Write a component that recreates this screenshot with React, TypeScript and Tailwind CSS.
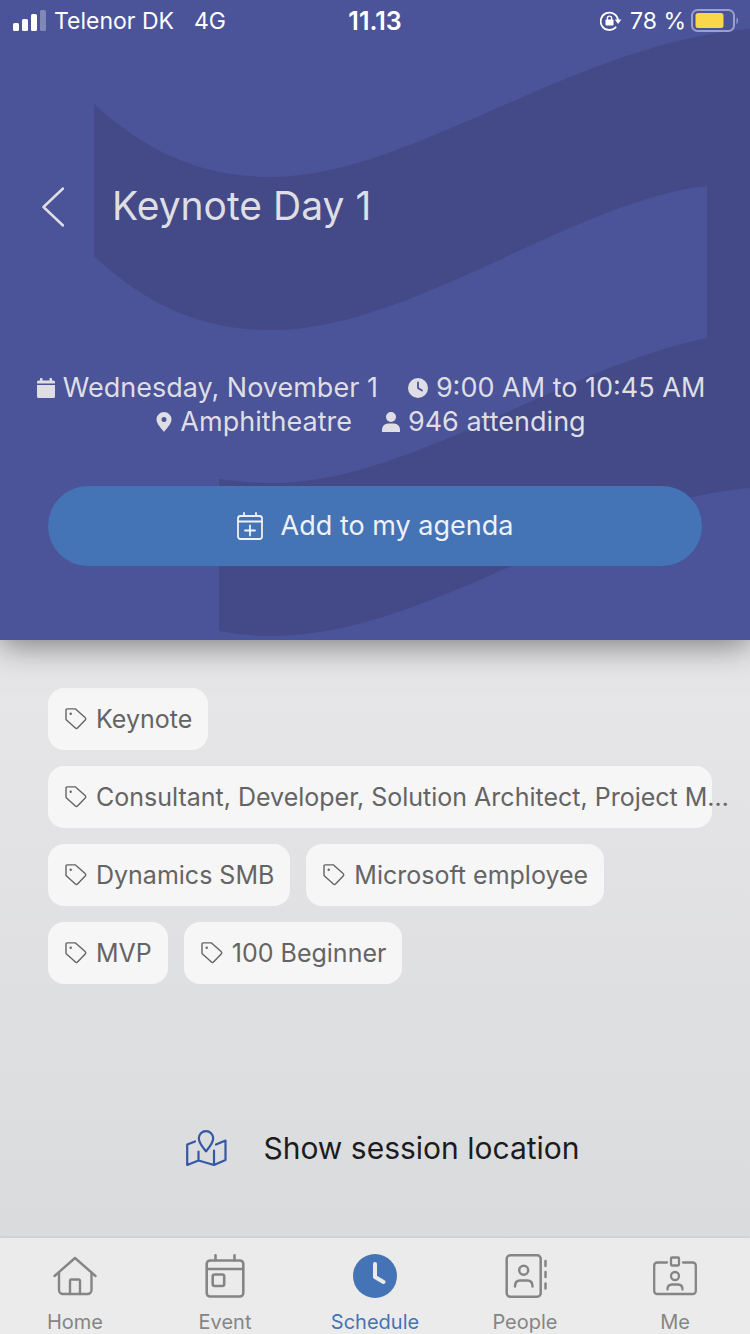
import type { ReactNode } from 'react'

interface Tab {
  label: string
  icon: ReactNode
  active?: boolean
}

const tags = [
  'Keynote',
  'Consultant, Developer, Solution Architect, Project M…',
  'Dynamics SMB',
  'Microsoft employee',
  'MVP',
  '100 Beginner',
]

const tabs: Tab[] = [
  { label: 'Home', icon: <HomeIcon /> },
  { label: 'Event', icon: <EventIcon /> },
  { label: 'Schedule', icon: <ScheduleIcon />, active: true },
  { label: 'People', icon: <PeopleIcon /> },
  { label: 'Me', icon: <BadgeIcon /> },
]

const strokeProps = {
  fill: 'none',
  stroke: 'currentColor',
  strokeLinecap: 'round' as const,
  strokeLinejoin: 'round' as const,
  'aria-hidden': true,
}

function HomeIcon() {
  return (
    <svg viewBox="0 0 44 44" className="size-11" {...strokeProps} strokeWidth="2.4">
      <path d="M1.5 22 22 4l20.5 18" />
      <path d="M6 18.5V36a4 4 0 0 0 4 4h24.5a4 4 0 0 0 4-4V18.5" />
      <path d="M17 40V27a1.5 1.5 0 0 1 1.5-1.5h7A1.5 1.5 0 0 1 27 27v13" />
    </svg>
  )
}

function EventIcon() {
  return (
    <svg viewBox="0 0 44 44" className="size-11" {...strokeProps} strokeWidth="2.6">
      <rect x="3.7" y="6.5" width="36.6" height="36" rx="3.5" />
      <path d="M4 15h36M12.5 1.3v5M31.5 1.3v5" />
      <rect x="9.7" y="20.5" width="11.5" height="11.5" rx="2" />
    </svg>
  )
}

function ScheduleIcon() {
  return (
    <svg viewBox="0 0 44 44" className="size-11" {...strokeProps} strokeWidth="4">
      <circle cx="22" cy="22" r="22" fill="currentColor" stroke="none" />
      <path d="M22 10v13l8.5 5" stroke="#ebebeb" />
    </svg>
  )
}

function PeopleIcon() {
  return (
    <svg viewBox="0 0 44 44" className="size-11" {...strokeProps} strokeWidth="2.5">
      <rect x="3.7" y="1.3" width="34" height="41.4" rx="3.5" />
      <circle cx="20.7" cy="16.3" r="4.5" />
      <path d="M12 32.5c0-4 2-6 5-6h7.5c3 0 5 2 5 6" />
      <path d="M42.5 7v5M42.5 18v5M42.5 29.5v5" />
    </svg>
  )
}

function BadgeIcon() {
  return (
    <svg viewBox="0 0 44 44" className="size-11" {...strokeProps} strokeWidth="2.3">
      <path d="M14 8.500H4.200a3 3 0 0 0-3 3V37a3 3 0 0 0 3 3h35.600a3 3 0 0 0 3-3V11.500a3 3 0 0 0-3-3H30" />
      <rect x="18" y="3.5" width="8" height="8" rx="1" />
      <circle cx="22" cy="22" r="4" />
      <path d="M14.5 35.5c0-3.500 2-5 4.500-5h6c2.500 0 4.500 1.500 4.500 5" />
    </svg>
  )
}

function TagIcon() {
  return (
    <svg viewBox="0 0 24 24" className="size-6 shrink-0" {...strokeProps} strokeWidth="1.4">
      <path d="M3 1.900h8.500l9.600 8.600a1.600 1.600 0 0 1 .1 2.400l-7.700 8a1.500 1.500 0 0 1-2.100.1L2.500 13a1.500 1.500 0 0 1-.5-1.100V2.900a1 1 0 0 1 1-1Z" />
      <circle cx="6.7" cy="6.7" r="1.2" fill="currentColor" stroke="none" />
    </svg>
  )
}

function CalendarPlusIcon() {
  return (
    <svg viewBox="0 0 26 28" className="h-7 w-[26px]" {...strokeProps} strokeWidth="1.8">
      <rect x="1" y="4" width="24" height="23" rx="2.5" />
      <path d="M1 9.5h24M7 1v3M19 1v3M13 13.5v10M8 18.5h10" />
    </svg>
  )
}

function MapIcon() {
  return (
    <svg viewBox="0 0 41 37" className="h-[37px] w-[41px]" {...strokeProps} strokeWidth="2.2">
      <path d="m9 11.5-7.8 3V35l11.300-4.500L28 35l11.500-5V10.500l-9.500 4M12.500 21.500v9M28 20.500V35" />
      <path d="M20 21.300c-2-2.500-7.200-8-7.200-13a7.200 7.200 0 0 1 14.400 0c0 5-5.200 10.500-7.200 13Z" />
    </svg>
  )
}

function CalendarIcon() {
  return (
    <svg viewBox="0 0 18 20" className="h-5 w-[18px]" fill="currentColor" aria-hidden>
      <path d="M0 5.500V4a1.500 1.500 0 0 1 1.500-1.500H3V1a1 1 0 0 1 2.500 0v1.500h7V1A1 1 0 0 1 15 1v1.500h1.500A1.500 1.500 0 0 1 18 4v1.500ZM0 7h18v11.500a1.500 1.500 0 0 1-1.500 1.500h-15A1.500 1.500 0 0 1 0 18.500Z" />
    </svg>
  )
}

function ClockIcon() {
  return (
    <svg viewBox="0 0 20 20" className="size-5" aria-hidden>
      <circle cx="10" cy="10" r="10" fill="currentColor" />
      <path d="M10 4.5V10l4 2.5" fill="none" stroke="#4b5399" strokeWidth="1.8" strokeLinecap="round" />
    </svg>
  )
}

function PinIcon() {
  return (
    <svg viewBox="0 0 16 20" className="h-5 w-4" fill="currentColor" fillRule="evenodd" aria-hidden>
      <path d="M8 20C6 17 .5 12 .5 7.500a7.500 7.500 0 0 1 15 0C15.500 12 10 17 8 20ZM8 5a2.500 2.500 0 1 0 0 5 2.500 2.500 0 0 0 0-5Z" />
    </svg>
  )
}

function PersonIcon() {
  return (
    <svg viewBox="0 0 18 20" className="h-5 w-[18px]" fill="currentColor" aria-hidden>
      <circle cx="9" cy="5" r="5" />
      <path d="M0 20v-2.500a6 6 0 0 1 6-6h6a6 6 0 0 1 6 6V20Z" />
    </svg>
  )
}

function StatusBar() {
  return (
    <div className="grid h-[42px] grid-cols-3 items-center px-3 text-[23px] leading-8 text-white">
      <div className="flex items-center gap-2 whitespace-nowrap">
        <svg viewBox="0 0 34 22" className="h-[22px] w-[34px]" fill="currentColor" aria-hidden>
          <rect x="1" y="13" width="6" height="8" rx="1.5" />
          <rect x="10" y="9" width="6" height="12" rx="1.5" />
          <rect x="19" y="4" width="6" height="17" rx="1.5" />
          <rect x="28" y="0" width="6" height="21" rx="1.5" opacity="0.3" />
        </svg>
        <span>Telenor DK</span>
        <span className="ml-3">4G</span>
      </div>
      <div className="text-center text-[25px] font-semibold">11.13</div>
      <div className="flex items-center justify-end whitespace-nowrap">
        <svg viewBox="0 0 22 20" className="mr-2 h-5 w-[22px]" aria-hidden>
          <path
            d="M15.700 16.300A8.700 8.700 0 1 1 18 9"
            fill="none"
            stroke="currentColor"
            strokeWidth="1.8"
            strokeLinecap="round"
          />
          <path d="M14.800 8.600h6.600l-3.300 4.400Z" fill="currentColor" />
          <rect x="5.5" y="8.500" width="8" height="6" rx="0.8" fill="currentColor" />
          <path d="M7.400 9V7.200a2.100 2.100 0 0 1 4.200 0V9" fill="none" stroke="currentColor" strokeWidth="1.4" />
        </svg>
        <span>78 %</span>
        <svg viewBox="0 0 48 24" className="ml-1 h-6 w-12" aria-hidden>
          <rect x="2" y="1" width="42" height="21" rx="5.5" fill="none" stroke="#9a9fd0" strokeWidth="2" />
          <rect x="5.5" y="4" width="28" height="15" rx="2.5" fill="#f8d74a" />
          <path d="M46.500 8.500V15c1-.5 1.500-1.700 1.500-3.200S47.500 9 46.500 8.500Z" fill="#9a9fd0" />
        </svg>
      </div>
    </div>
  )
}

function Meta({ icon, children }: { icon: ReactNode; children: ReactNode }) {
  return (
    <li className="flex items-center gap-2 whitespace-nowrap">
      {icon}
      <span>{children}</span>
    </li>
  )
}

function SessionHeader() {
  return (
    <header className="relative z-10 bg-[#4b5399] shadow-[0_4px_32px_rgba(0,0,0,0.5)]">
      {/* ribbon watermark behind the session details */}
      <svg
        viewBox="0 0 750 640"
        preserveAspectRatio="none"
        className="absolute inset-0 h-full w-full"
        fill="#434a87"
        aria-hidden
      >
        <path d="M94 104C150 155 205 177 272 177C410 177 575 43 750 29V488C590 500 430 636 272 636Q245 636 219 631V479Q245 483 272 483C410 483 555 370 707 338V186C575 200 410 330 272 330C205 330 150 308 94 256Z" />
      </svg>
      <div className="relative">
        <StatusBar />
        <div className="flex h-[329px] items-center gap-12 px-10 text-[#dedee4]">
          <button type="button" aria-label="Back">
            <svg viewBox="0 0 24 40" className="h-10 w-6" {...strokeProps} strokeWidth="2.5">
              <path d="M23 1.500 3.500 20 23 38.500" />
            </svg>
          </button>
          <h1 className="pb-0.5 text-[39px] leading-12">Keynote Day 1</h1>
        </div>
        <ul className="flex flex-wrap justify-center gap-x-[30px] pr-2 text-[27px] leading-[34px] text-[#dedee4]">
          <Meta icon={<CalendarIcon />}>Wednesday, November 1</Meta>
          <Meta icon={<ClockIcon />}>9:00 AM to 10:45 AM</Meta>
          <Meta icon={<PinIcon />}>Amphitheatre</Meta>
          <Meta icon={<PersonIcon />}>946 attending</Meta>
        </ul>
        <div className="px-12 pt-[47px] pb-[74px]">
          <button
            type="button"
            className="flex h-20 w-full items-center justify-center gap-[18px] rounded-full bg-[#4474b6] text-[27px] text-[#eef1f8]"
          >
            <CalendarPlusIcon />
            Add to my agenda
          </button>
        </div>
      </div>
    </header>
  )
}

function TabBar() {
  return (
    <nav className="grid h-24 shrink-0 grid-cols-5 overflow-hidden bg-[#ebebeb] shadow-[0_0_3px_rgba(0,0,0,0.15)]">
      {tabs.map((tab) => (
        <a
          key={tab.label}
          href={`#${tab.label.toLowerCase()}`}
          aria-current={tab.active ? 'page' : undefined}
          className={`flex flex-col items-center gap-3 pt-4 text-[20px] leading-6 ${
            tab.active ? 'text-[#4474b6]' : 'text-[#858585]'
          }`}
        >
          {tab.icon}
          {tab.label}
        </a>
      ))}
    </nav>
  )
}

export default function App() {
  return (
    <div className="flex min-h-screen flex-col bg-linear-to-b from-[#e6e6e8] from-50% to-[#d8d9db] font-['Inter','Liberation_Sans',sans-serif]">
      <SessionHeader />
      <main className="flex flex-1 flex-col">
        <ul className="flex flex-wrap gap-4 pt-12 pr-[38px] pl-12 text-[25px] text-[#646464]">
          {tags.map((tag) => (
            <li key={tag} className="flex h-[62px] max-w-full items-center gap-2 rounded-2xl bg-[#f6f6f6] px-4">
              <TagIcon />
              <span className="pt-0.5 whitespace-nowrap">{tag}</span>
            </li>
          ))}
        </ul>
        <div className="flex flex-1 items-end justify-center pb-[66px] pl-4">
          <button type="button" className="flex items-center gap-9 text-[30px] leading-12 text-[#1c1c1e]">
            <span className="text-[#3458a4]">
              <MapIcon />
            </span>
            Show session location
          </button>
        </div>
      </main>
      <TabBar />
    </div>
  )
}
